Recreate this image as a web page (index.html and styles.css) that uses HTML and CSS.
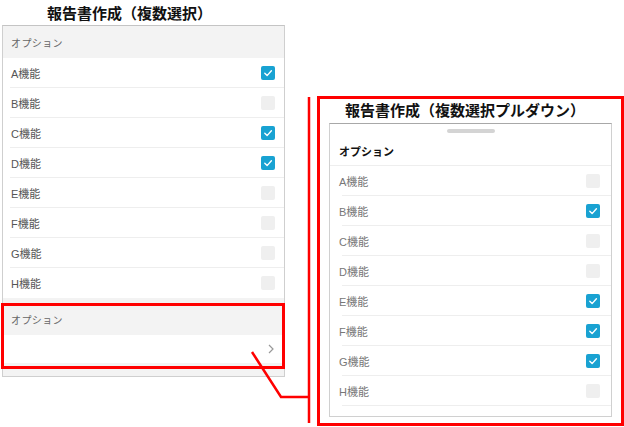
FILE: index.html
```html
<!DOCTYPE html>
<html>
<head>
  <meta charset="UTF-8">
  <link rel="stylesheet" href="styles.css">
</head>
<body>
  <div class="page">

    <div class="left-col">
      <div class="left-title">報告書作成（複数選択）</div>
      <div class="left-panel">
        <div class="left-header">オプション</div>
        <div class="row"><span>A機能</span><span class="check on"><svg viewBox="0 0 14 14"><polyline points="3.8,7.3 6.1,9.6 10.4,4.8"/></svg></span></div>
        <div class="row"><span>B機能</span><span class="check"></span></div>
        <div class="row"><span>C機能</span><span class="check on"><svg viewBox="0 0 14 14"><polyline points="3.8,7.3 6.1,9.6 10.4,4.8"/></svg></span></div>
        <div class="row"><span>D機能</span><span class="check on"><svg viewBox="0 0 14 14"><polyline points="3.8,7.3 6.1,9.6 10.4,4.8"/></svg></span></div>
        <div class="row"><span>E機能</span><span class="check"></span></div>
        <div class="row"><span>F機能</span><span class="check"></span></div>
        <div class="row"><span>G機能</span><span class="check"></span></div>
        <div class="row last"><span>H機能</span><span class="check"></span></div>
        <div class="left-section">オプション</div>
        <div class="select-row">
          <svg class="chevron" viewBox="0 0 8 10"><polyline points="2,1 6,5 2,9"/></svg>
        </div>
        <div class="left-foot"></div>
      </div>
    </div>

    <div class="right-col">
      <div class="right-title">報告書作成（複数選択プルダウン）</div>
      <div class="right-panel">
        <div class="handle"></div>
        <div class="right-header">オプション</div>
        <div class="row"><span>A機能</span><span class="check"></span></div>
        <div class="row"><span>B機能</span><span class="check on"><svg viewBox="0 0 14 14"><polyline points="3.8,7.3 6.1,9.6 10.4,4.8"/></svg></span></div>
        <div class="row"><span>C機能</span><span class="check"></span></div>
        <div class="row"><span>D機能</span><span class="check"></span></div>
        <div class="row"><span>E機能</span><span class="check on"><svg viewBox="0 0 14 14"><polyline points="3.8,7.3 6.1,9.6 10.4,4.8"/></svg></span></div>
        <div class="row"><span>F機能</span><span class="check on"><svg viewBox="0 0 14 14"><polyline points="3.8,7.3 6.1,9.6 10.4,4.8"/></svg></span></div>
        <div class="row"><span>G機能</span><span class="check on"><svg viewBox="0 0 14 14"><polyline points="3.8,7.3 6.1,9.6 10.4,4.8"/></svg></span></div>
        <div class="row"><span>H機能</span><span class="check"></span></div>
      </div>
    </div>

  </div>

  <!-- 注釈の赤線 -->
  <svg class="annotation" viewBox="0 0 624 427">
    <rect x="2.5" y="304.5" width="281" height="63"/>
    <polyline points="252,352 281,397 309,397"/>
    <line x1="309" y1="97" x2="309" y2="423"/>
  </svg>
</body>
</html>
```

FILE: styles.css
```css
body {
  margin: 0;
  width: 624px;
  height: 427px;
  position: relative;
  overflow: hidden;
  background-color: #fff;
  font-family: "Liberation Sans", "Noto Sans CJK JP", sans-serif;
  color: #555;
}

.page {
  display: flex;
  align-items: flex-start;
}

/* 左：複数選択 */
.left-col {
  width: 283px;
  margin-left: 2px;
}
.left-title {
  height: 25px;
  padding-left: 45px;
  line-height: 28px;
  font-size: 15px;
  font-weight: bold;
  color: #111;
  box-sizing: border-box;
}
.left-panel {
  border: 1px solid #cfcfcf;
  border-top-color: #c4c4c4;
}
.left-header {
  height: 32px;
  padding-top: 3px;
  line-height: 29px;
  padding-left: 8px;
  box-sizing: border-box;
  background-color: #f3f3f3;
  font-size: 10px;
  letter-spacing: 0.4px;
  color: #666;
}
.row {
  position: relative;
  height: 30px;
  display: flex;
  align-items: center;
  justify-content: space-between;
  padding: 0 9px 0 8px;
  font-size: 11px;
}
.row::after {
  content: "";
  position: absolute;
  left: 7px;
  right: 0;
  bottom: 0;
  height: 1px;
  background-color: #eeeeee;
}
.row.last::after {
  display: none;
}
.check {
  width: 14px;
  height: 14px;
  border-radius: 2px;
  background-color: #efefef;
  display: block;
}
.check.on {
  background-color: #19a2d2;
}
.check svg {
  width: 14px;
  height: 14px;
  display: block;
  fill: none;
  stroke: #fff;
  stroke-width: 1.4;
  stroke-linecap: round;
  stroke-linejoin: round;
}
.left-section {
  height: 37px;
  padding: 15px 0 0 8px;
  box-sizing: border-box;
  line-height: 16px;
  background-color: #f3f3f3;
  font-size: 10px;
  letter-spacing: 0.4px;
  color: #666;
}
.select-row {
  height: 28px;
  display: flex;
  align-items: center;
  justify-content: flex-end;
  padding-right: 9px;
}
.chevron {
  width: 8px;
  height: 10px;
  fill: none;
  stroke: #999;
  stroke-width: 1.2;
}
.left-foot {
  height: 13px;
  background-color: #f3f3f3;
}

/* 右：複数選択プルダウン */
.right-col {
  margin-left: 32px;
  margin-top: 96px;
  width: 307px;
  height: 330px;
  border: 3px solid #f00;
  box-sizing: border-box;
}
.right-title {
  height: 20px;
  line-height: 23px;
  margin-bottom: 4px;
  padding-left: 25px;
  font-size: 15px;
  font-weight: bold;
  color: #111;
}
.right-panel {
  width: 283px;
  height: 294px;
  margin-left: 9px;
  border: 1px solid #d0d0d0;
  border-top-color: #a8a8a8;
  box-sizing: border-box;
}
.handle {
  width: 48px;
  height: 4px;
  margin: 5px auto 0;
  border-radius: 2px;
  background-color: #d4d4d4;
}
.right-header {
  padding: 9px 0 3px 9px;
  line-height: 20px;
  font-size: 11px;
  font-weight: bold;
  color: #111;
  border-bottom: 1px solid #eeeeee;
}
.right-panel .row {
  padding: 0 11px 0 9px;
  color: #777;
}
.right-panel .row::after {
  left: 12px;
}

.annotation {
  position: absolute;
  left: 0;
  top: 0;
  width: 624px;
  height: 427px;
  fill: none;
  stroke: #f00;
}
.annotation rect {
  stroke-width: 3;
}
.annotation polyline,
.annotation line {
  stroke-width: 2.5;
}
```
